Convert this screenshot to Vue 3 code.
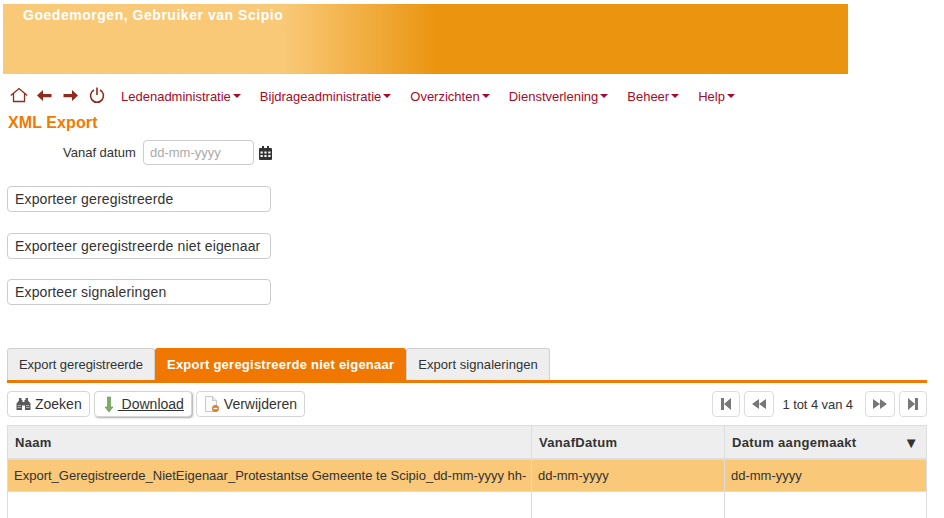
<script setup>
const menu = ['Ledenadministratie', 'Bijdrageadministratie', 'Overzichten', 'Dienstverlening', 'Beheer', 'Help']
const forms = ['Exporteer geregistreerde', 'Exporteer geregistreerde niet eigenaar', 'Exporteer signaleringen']
const tabs = [
  { label: 'Export geregistreerde', active: false },
  { label: 'Export geregistreerde niet eigenaar', active: true },
  { label: 'Export signaleringen', active: false }
]
</script>

<template>
  <div class="page">
    <header class="banner"><span class="greeting">Goedemorgen, Gebruiker van Scipio</span></header>

    <nav class="nav">
      <div class="icons">
        <svg class="ic" width="18" height="18" viewBox="0 0 18 18"><path d="M.8 8.500 9 1.500l8.200 7M3.500 6.800V14.500h11V6.800" fill="none" stroke="#8f2a1c" stroke-width="1.300"/></svg>
        <svg class="ic back" width="16" height="18" viewBox="0 0 16 18"><path d="M0 8.500L6 3v4h8.500v3.200H6V14z" fill="#8f2a1c"/></svg>
        <svg class="ic" width="16" height="18" viewBox="0 0 16 18"><path d="M15 8.500L9 3v4H.5v3.200H9V14z" fill="#8f2a1c"/></svg>
        <svg class="ic" width="16" height="18" viewBox="0 0 16 18"><path d="M5 3a6.500 6.500 0 1 0 6 0M8 .5V8" fill="none" stroke="#8f2a1c" stroke-width="1.600"/></svg>
      </div>
      <a v-for="m in menu" :key="m" class="menu-item">{{ m }}<i class="caret"></i></a>
    </nav>

    <h1 class="title">XML Export</h1>

    <div class="date-row">
      <label class="date-label">Vanaf datum</label>
      <div class="date-input">dd-mm-yyyy</div>
      <svg class="cal" width="13" height="14" viewBox="0 0 13 14">
        <path d="M3 0h2v2h3V0h2v2h2a1 1 0 0 1 1 1v10a1 1 0 0 1-1 1H1a1 1 0 0 1-1-1V3a1 1 0 0 1 1-1h2z" fill="#333"/>
        <g fill="#fff"><rect x="1.500" y="5.500" width="2.200" height="2"/><rect x="5.400" y="5.500" width="2.200" height="2"/><rect x="9.300" y="5.500" width="2.200" height="2"/><rect x="1.500" y="9" width="2.200" height="2"/><rect x="5.400" y="9" width="2.200" height="2"/><rect x="9.300" y="9" width="2.200" height="2"/></g>
      </svg>
    </div>

    <div class="forms">
      <button v-for="f in forms" :key="f" class="form-btn">{{ f }}</button>
    </div>

    <div class="tabs">
      <div v-for="t in tabs" :key="t.label" class="tab" :class="{ active: t.active }">{{ t.label }}</div>
    </div>

    <div class="toolbar">
      <div class="tool-group">
        <button class="tool search">
          <svg width="15" height="12" viewBox="0 0 15 12"><path d="M3 0h2.500v2H6.500v2h2V2h1V0H12v2.500l2.500 3V12H9V7.500H6V12H.5V5.500L3 2.500z" fill="#5a5a5a"/><path d="M1.500 7.500h3.500M10 7.500h3.500M1.500 9.500h3.500M10 9.500h3.500" stroke="#c4c4c4" stroke-width=".8"/></svg>
          Zoeken
        </button>
        <button class="tool download">
          <svg width="10" height="17" viewBox="0 0 10 17"><path d="M3.500 1h3v10H9l-4 5-4-5h2.500z" fill="#7fae63" stroke="#5b8a45" stroke-width=".6"/></svg>
          <span class="u">&nbsp;Download</span>
        </button>
        <button class="tool">
          <svg width="16" height="18" viewBox="0 0 16 18"><path d="M1.500 1.500h7l4 4v11h-11z" fill="#fafafa" stroke="#c8c8c8"/><path d="M8.500 1.500v4h4" fill="#e8e8e8" stroke="#c8c8c8"/><circle cx="11.500" cy="13.500" r="3.500" fill="#d9822b"/><path d="M9.500 13.500h4" stroke="#fff" stroke-width="1.300"/></svg>
          Verwijderen
        </button>
      </div>
      <div class="pager">
        <button class="page-btn"><svg width="12" height="14" viewBox="0 0 12 14"><path d="M1 1h3v12H1zM11 1v12L4 7z" fill="#777"/></svg></button>
        <button class="page-btn wide"><svg width="16" height="12" viewBox="0 0 16 12"><path d="M8 1v10L1 6zM15 1v10L8 6z" fill="#777"/></svg></button>
        <span class="page-text">1 tot 4 van 4</span>
        <button class="page-btn wide"><svg width="16" height="12" viewBox="0 0 16 12"><path d="M1 1v10l7-5zM8 1v10l7-5z" fill="#777"/></svg></button>
        <button class="page-btn"><svg width="12" height="14" viewBox="0 0 12 14"><path d="M1 1v12l7-6zM8 1h3v12H8z" fill="#777"/></svg></button>
      </div>
    </div>

    <div class="grid">
      <div class="cell head c1">Naam</div>
      <div class="cell head c2">VanafDatum</div>
      <div class="cell head c3">Datum aangemaakt<span class="sort">▼</span></div>
      <div class="cell sel c1">Export_Geregistreerde_NietEigenaar_Protestantse Gemeente te Scipio_dd-mm-yyyy hh-</div>
      <div class="cell sel c2">dd-mm-yyyy</div>
      <div class="cell sel c3">dd-mm-yyyy</div>
      <div class="cell empty c1"></div>
      <div class="cell empty c2"></div>
      <div class="cell empty c3"></div>
    </div>
  </div>
</template>

<style>
html, body { margin: 0; background: #fff; overflow: hidden; }
</style>

<style scoped>
.page {
  width: 944px;
  height: 518px;
  overflow: hidden;
  box-sizing: border-box;
  padding-top: 4px;
  font-family: "Liberation Sans", Arial, sans-serif;
  color: #333;
  font-size: 13px;
}
.banner {
  margin-left: 3px;
  width: 845px;
  height: 70px;
  box-sizing: border-box;
  padding: 3px 0 0 20px;
  background: linear-gradient(90deg, #f9c978 0, #f9c978 280px, #ea940f 435px, #ea940f 100%);
}
.greeting { color: #fff; font-weight: bold; font-size: 14px; letter-spacing: .53px; line-height: 16px; display: block; }
.nav { display: flex; align-items: center; height: 24px; margin-top: 10px; padding-left: 10px; }
.icons { display: flex; align-items: center; gap: 10px; margin-right: 16px; }
.ic { display: block; }
.back { margin-left: -1px; }
.menu-item { color: #a50a2a; font-size: 13px; margin-right: 19px; display: flex; align-items: center; white-space: nowrap; }
.caret { display: inline-block; margin-left: 2px; border-left: 4px solid transparent; border-right: 4px solid transparent; border-top: 4px solid #a50a2a; }
.title { margin: 6px 0 0 8px; font-size: 16px; line-height: 18px; font-weight: bold; letter-spacing: .1px; color: #f07a00; }
.date-row { display: flex; align-items: center; margin-top: 8px; height: 25px; padding-left: 63px; }
.date-label { font-size: 13px; width: 80px; }
.date-input { width: 111px; height: 25px; box-sizing: border-box; border: 1px solid #ccc; border-radius: 4px; color: #aaa; padding: 4px 6px; font-size: 13px; }
.cal { margin-left: 5px; }
.forms { display: flex; flex-direction: column; gap: 20.500px; margin: 21px 0 0 7px; align-items: flex-start; }
.form-btn { width: 264px; height: 26px; box-sizing: border-box; background: #fff; border: 1px solid #ccc; border-radius: 4px; text-align: left; padding: 0 7px; font: 14px "Liberation Sans", Arial, sans-serif; letter-spacing: .15px; color: #333; }
.tabs { display: flex; margin: 43px 17px 0 7px; border-bottom: 3px solid #f07800; height: 32px; }
.tab { height: 32px; box-sizing: border-box; padding: 8px 11px 0; background: #eee; border: 1px solid #d0d0d0; border-bottom: 0; border-radius: 3px 3px 0 0; font-size: 13px; letter-spacing: -.05px; white-space: nowrap; }
.tab:last-child { letter-spacing: .05px; }
.tab.active { background: #f07800; border-color: #f07800; color: #fff; font-weight: bold; letter-spacing: .24px; }
.toolbar { display: flex; justify-content: space-between; align-items: center; margin: 8px 17px 0 7px; height: 26px; }
.tool-group { display: flex; gap: 4px; }
.tool { display: flex; align-items: center; gap: 4px; height: 26px; box-sizing: border-box; background: #fff; border: 1px solid #d5d5d5; border-radius: 4px; padding: 0 7px; font: 14px "Liberation Sans", Arial, sans-serif; color: #333; }
.search { padding-left: 8px; }
.download { box-shadow: 1px 1px 2px #aaa; padding-left: 9px; }
.u { text-decoration: underline; }
.pager { display: flex; align-items: center; gap: 4px; }
.page-btn { width: 28px; height: 26px; padding: 0; background: #fff; border: 1px solid #ddd; border-radius: 4px; display: flex; align-items: center; justify-content: center; }
.page-btn.wide { width: 30px; }
.page-text { margin: 0 8px 0 4px; font-size: 13px; letter-spacing: -.08px; }
.grid { display: grid; grid-template-columns: 524px 193px 1fr; grid-template-rows: 34px 32px 40px; margin: 8px 17px 0 7px; border-left: 1px solid #ddd; border-right: 1px solid #ddd; border-top: 1px solid #ddd; }
.cell { box-sizing: border-box; padding: 0 6px; display: flex; align-items: center; white-space: nowrap; overflow: hidden; border-right: 1px solid #ddd; border-bottom: 1px solid #ddd; font-size: 13px; }
.c3 { border-right: 0; }
.head { background: #eee; font-weight: bold; padding-left: 7px; border-bottom: 2px solid #ddd; position: relative; letter-spacing: .33px; }
.sort { position: absolute; right: 7px; font-size: 15px; color: #333; }
.sel { background: #f9c878; }
.empty { background: #fff; border-bottom: 0; }
</style>
